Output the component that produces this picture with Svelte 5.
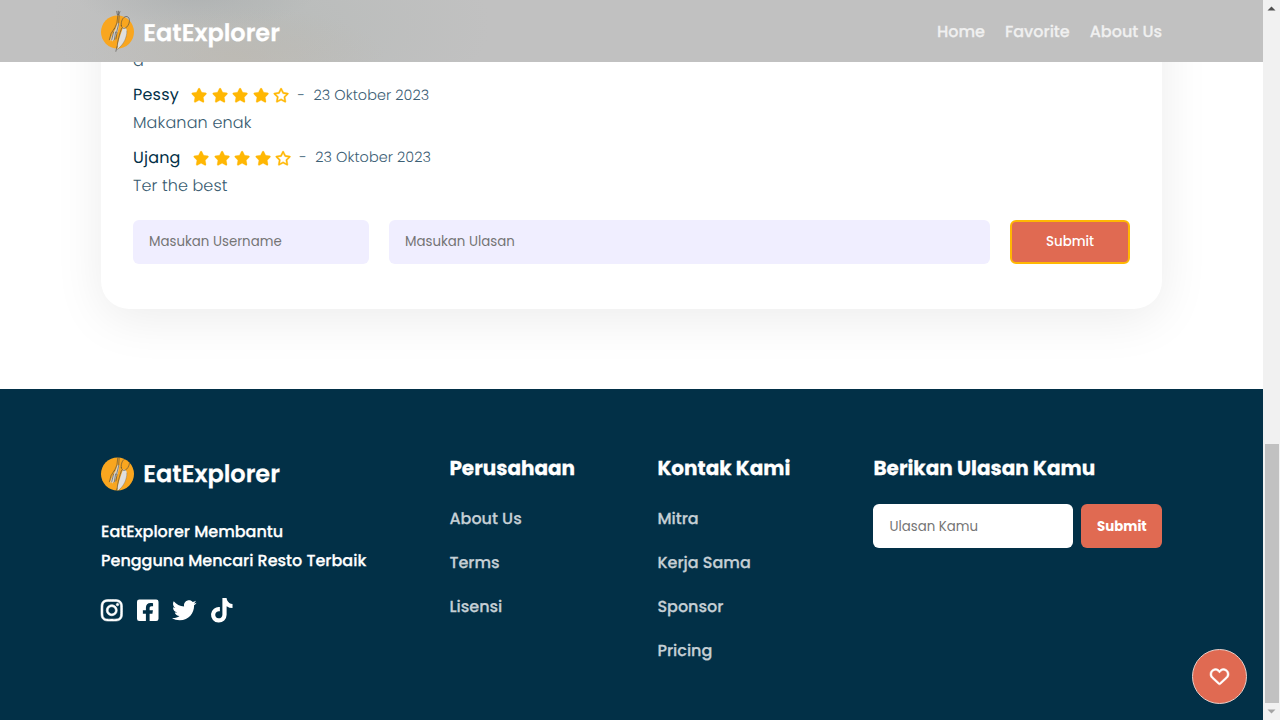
<script>
  const reviews = [
    { name: 'Pessy', date: '23 Oktober 2023', text: 'Makanan enak', tw: 118.6 },
    { name: 'Ujang', date: '23 Oktober 2023', text: 'Ter the best', tw: 94.5 }
  ];
  const nav = ['Home', 'Favorite', 'About Us'];
  const company = ['About Us', 'Terms', 'Lisensi'];
  const contact = ['Mitra', 'Kerja Sama', 'Sponsor', 'Pricing'];
  const starFull = 'M316.9 18C311.6 7 300.4 0 288.1 0s-23.4 7-28.8 18L195 150.3 51.4 171.5c-12 1.8-22 10.2-25.7 21.7s-.7 24.2 7.9 32.7L137.8 329 113.2 474.7c-2 12 3 24.2 12.9 31.3s23 8 33.8 2.3l128.3-68.5 128.3 68.5c10.8 5.7 23.9 4.9 33.8-2.3s14.9-19.3 12.9-31.3L438.5 329 542.7 225.9c8.6-8.5 11.7-21.2 7.9-32.7s-13.7-19.9-25.7-21.7L381.2 150.3 316.9 18z';
  const starEmpty = 'M287.9 0c9.2 0 17.6 5.2 21.6 13.5l68.6 141.3 153.2 22.6c9 1.3 16.5 7.6 19.3 16.3s.5 18.1-5.9 24.5L433.6 328.4l26.2 155.6c1.5 9-2.2 18.1-9.7 23.5s-17.3 6-25.3 1.7l-137-73.2L151 509.1c-8.1 4.3-17.9 3.7-25.3-1.7s-11.2-14.5-9.7-23.5l26.2-155.6L31.1 218.2c-6.5-6.4-8.7-15.9-5.9-24.5s10.3-14.9 19.3-16.3l153.2-22.6L266.3 13.5C270.4 5.2 278.7 0 287.9 0zm0 79L235.4 187.2c-3.5 7.1-10.2 12.1-18.1 13.3L99 217.9 184.9 303c5.5 5.5 8.1 13.3 6.8 21L171.4 443.7l105.2-56.2c7.1-3.8 15.6-3.8 22.6 0l105.2 56.2L384.2 324.1c-1.3-7.7 1.2-15.5 6.8-21l85.9-85.1L358.6 200.5c-7.8-1.2-14.6-6.1-18.1-13.3L287.9 79z';
  const socials = [
    { w: 448, bold: 12, d: 'M224.1 141c-63.6 0-114.9 51.3-114.9 114.9s51.3 114.9 114.9 114.9S339 319.5 339 255.9 287.7 141 224.1 141zm0 189.6c-41.1 0-74.7-33.5-74.7-74.7s33.5-74.7 74.7-74.7 74.7 33.5 74.7 74.7-33.6 74.7-74.7 74.7zm146.4-194.3c0 14.9-12 26.8-26.8 26.8-14.9 0-26.8-12-26.8-26.8s12-26.8 26.8-26.8 26.8 12 26.8 26.8zm76.1 27.2c-1.7-35.9-9.9-67.7-36.2-93.9-26.2-26.2-58-34.4-93.9-36.2-37-2.1-147.9-2.1-184.9 0-35.8 1.7-67.6 9.9-93.9 36.1s-34.4 58-36.2 93.9c-2.1 37-2.1 147.9 0 184.9 1.7 35.9 9.9 67.7 36.2 93.9s58 34.4 93.9 36.2c37 2.1 147.9 2.1 184.9 0 35.9-1.7 67.7-9.9 93.9-36.2 26.2-26.2 34.4-58 36.2-93.9 2.1-37 2.1-147.8 0-184.8zM398.8 388c-7.8 19.6-22.9 34.7-42.6 42.6-29.5 11.7-99.5 9-132.1 9s-102.7 2.6-132.1-9c-19.6-7.8-34.7-22.9-42.6-42.6-11.7-29.5-9-99.5-9-132.1s-2.6-102.7 9-132.1c7.8-19.6 22.9-34.7 42.6-42.6 29.5-11.7 99.5-9 132.1-9s102.7-2.6 132.1 9c19.6 7.8 34.7 22.9 42.6 42.6 11.7 29.5 9 99.5 9 132.1s2.7 102.7-9 132.1z' },
    { w: 448, bold: 0, d: 'M400 32H48A48 48 0 0 0 0 80v352a48 48 0 0 0 48 48h137.25V327.69h-63V256h63v-54.64c0-62.15 37-96.48 93.67-96.48 27.14 0 55.52 4.84 55.52 4.84v61h-31.27c-30.81 0-40.42 19.12-40.42 38.73V256h68.78l-11 71.69h-57.78V480H400a48 48 0 0 0 48-48V80a48 48 0 0 0-48-48z' },
    { w: 512, bold: 0, d: 'M459.37 151.716c.325 4.548.325 9.097.325 13.645 0 138.72-105.583 298.558-298.558 298.558-59.452 0-114.68-17.219-161.137-47.106 8.447.974 16.568 1.299 25.34 1.299 49.055 0 94.213-16.568 130.274-44.832-46.132-.975-84.792-31.188-98.112-72.772 6.498.974 12.995 1.624 19.818 1.624 9.421 0 18.843-1.3 27.614-3.573-48.081-9.747-84.143-51.98-84.143-102.985v-1.299c13.969 7.797 30.214 12.67 47.431 13.319-28.264-18.843-46.781-51.005-46.781-87.391 0-19.492 5.197-37.36 14.294-52.954 51.655 63.675 129.3 105.258 216.365 109.807-1.624-7.797-2.599-15.918-2.599-24.04 0-57.828 46.782-104.934 104.934-104.934 30.213 0 57.502 12.67 76.67 33.137 23.715-4.548 46.456-13.32 66.599-25.34-7.798 24.366-24.366 44.833-46.132 57.827 21.117-2.273 41.584-8.122 60.426-16.243-14.292 20.791-32.161 39.308-52.628 54.253z' },
    { w: 448, bold: 0, d: 'M448,209.91a210.06,210.06,0,0,1-122.77-39.25V349.38A162.55,162.55,0,1,1,185,188.31V278.2a74.62,74.62,0,1,0,52.23,71.18V0l88,0a121.18,121.18,0,0,0,1.86,22.17h0A122.18,122.18,0,0,0,381,102.39a121.43,121.43,0,0,0,67,20.14Z' }
  ];

  // Tracks a label so that it fills the given width in pixels.
  function fit(node, width) {
    node.style.letterSpacing = '0px';
    const natural = node.getBoundingClientRect().width;
    node.style.letterSpacing = (width - natural) / node.textContent.length + 'px';
  }
</script>

{#snippet brand(clipped)}
  <div class="brand">
    <svg class="logo" width="33" height="42" viewBox="0 0 33 42">
      <clipPath id="disc"><circle cx="16.5" cy="22" r="16.5" /></clipPath>
      <circle cx="16.5" cy="22" r="16.5" fill="#f9a61f" />
      <g clip-path={clipped ? 'url(#disc)' : null} stroke-linecap="round" stroke-linejoin="round">
        <path d="M16.8 12.5L14.5 19l-3 5-2.2 5.5.6 2 .9-2 .7 2.2.9-2.2 1 1.6.8-3.5 2.6-6 1.7-8z" fill="#d5d3cf" />
        <path d="M22 17.6c2.7-.4 4.3 1.6 3.8 5.9-1 6.5-4 11.5-9.1 15.3l-.3-3.8 3-10z" fill="#e0dfdd" />
        <g fill="none" stroke="#4a4640" stroke-width=".6">
          <path d="M15.8 1.3l.5 3.2 1.5.4 1.1-3.3M17.4 1.2v3M16.9 5l-1 8-2.6 6M18.2 5.2l-.6 9-2 8M13.3 18.5l-3.2 5-1.7 6.2M12.6 22l-1.8 7.5M14.6 22l-1.3 8M16 22.5L15 29" />
          <path d="M20.3 15.5c-.6-4 1.5-8.4 4.7-9 3-.2 4.2 3.2 3 6.7-1 3-3 5.2-5 5.2-1.7 0-2.6-1.5-2.7-2.9M20.5 18.5c-2 5.5-3.8 11.5-4.4 18.5M15.8 37l-.9 4.3" />
          <path d="M25.8 21c.2 6.5-3 13-9.3 18.5" stroke-width=".3" />
        </g>
      </g>
    </svg>
    <span class="wordmark">EatExplorer</span>
  </div>
{/snippet}

<div class="window">
  <div class="page">
    <header>
      {@render brand(false)}
      <nav>
        {#each nav as label}<a href="#top">{label}</a>{/each}
      </nav>
    </header>

    <main>
      <section class="card">
        <p>a</p>
        {#each reviews as r}
          <article>
            <div class="head">
              <b>{r.name}</b>
              <div class="stars">
                {#each [1, 1, 1, 1, 0] as on}
                  <svg viewBox="0 0 576 512" width="16.2" height="14.4"><path d={on ? starFull : starEmpty} fill="#ffb703" stroke="#ffb703" stroke-width={on ? 8 : 14} /></svg>
                {/each}
              </div>
              <span class="dash">-</span>
              <time use:fit={115.7}>{r.date}</time>
            </div>
            <p><span use:fit={r.tw}>{r.text}</span></p>
          </article>
        {/each}
        <form>
          <input class="user" placeholder="Masukan Username" />
          <input class="review" placeholder="Masukan Ulasan" />
          <button type="button">Submit</button>
        </form>
      </section>
    </main>

    <footer>
      <div class="about">
        {@render brand(true)}
        <div class="tagline">
          <span>EatExplorer Membantu</span>
          <span>Pengguna Mencari Resto Terbaik</span>
        </div>
        <div class="social">
          {#each socials as s}
            <svg viewBox="0 0 {s.w} 512" width={s.w * 24.6 / 512} height="24.6"><path d={s.d} fill="#fff" stroke="#fff" stroke-width={s.bold} /></svg>
          {/each}
        </div>
      </div>
      <div class="links">
        <h3>Perusahaan</h3>
        {#each company as label}<a href="#top">{label}</a>{/each}
      </div>
      <div class="links">
        <h3>Kontak Kami</h3>
        {#each contact as label}<a href="#top">{label}</a>{/each}
      </div>
      <div class="links">
        <h3>Berikan Ulasan Kamu</h3>
        <div class="send">
          <input placeholder="Ulasan Kamu" />
          <button type="button">Submit</button>
        </div>
      </div>
    </footer>

    <button class="fab" type="button" aria-label="Favorite">
      <svg width="19" height="19" viewBox="0 0 512 512"><path fill="#fff" stroke="#fff" stroke-width="14" d="M225.8 468.2l-2.5-2.3L48.1 303.2C17.4 274.7 0 234.7 0 192.8v-3.3c0-70.4 50-130.8 119.2-144C158.6 37.9 198.9 47 231 69.6c9 6.4 17.4 13.8 25 22.3c4.2-4.8 8.7-9.2 13.5-13.3c3.7-3.2 7.5-6.2 11.5-9c0 0 0 0 0 0C313.1 47 353.4 37.9 392.8 45.4C462 58.6 512 119.1 512 189.5v3.3c0 41.9-17.4 81.9-48.1 110.4L288.7 465.9l-2.5 2.3c-8.2 7.6-19 11.9-30.2 11.9s-22-4.2-30.2-11.9zM239.1 145c-.4-.3-.7-.7-1-1.1l-17.8-20c0 0-.1-.1-.1-.1c0 0 0 0 0 0c-23.1-25.9-58-37.7-92-31.2C81.6 101.5 48 142.1 48 189.5v3.3c0 28.5 11.9 55.8 32.8 75.2L256 430.7 431.2 268c20.9-19.4 32.8-46.7 32.8-75.2v-3.3c0-47.3-33.6-88-80.1-96.9c-34-6.5-69 5.4-92 31.2c0 0 0 0-.1 .1s0 0-.1 .1l-17.8 20c-.3 .4-.7 .7-1 1.1c-4.5 4.5-10.6 7-16.9 7s-12.4-2.5-16.9-7z" /></svg>
    </button>
  </div>

  <div class="scrollbar">
    <svg width="9" height="5" viewBox="0 0 9 5"><path d="M.5 4.5L4.5.5l4 4z" fill="#505050" /></svg>
    <div class="thumb"></div>
    <svg width="9" height="5" viewBox="0 0 9 5"><path d="M.5.5l4 4 4-4z" fill="#a3a3a3" /></svg>
  </div>
</div>

<style>
  :global(body) { margin: 0; overflow: hidden; }
  .window, .window * { box-sizing: border-box; }
  .window {
    display: flex; width: 1280px; height: 720px; overflow: hidden; background: #fff;
    font-family: Poppins, Inter, "Open Sans", sans-serif; font-size: 16px;
    text-rendering: geometricPrecision; color: #023047;
  }
  span, a, b, time, h3 { white-space: nowrap; }
  a { text-decoration: none; }
  p, h3 { margin: 0; }
  svg { display: block; flex: none; overflow: visible; }
  input, button { font-family: inherit; font-size: 13.33px; border: 0; }
  .page { position: relative; display: flex; flex-direction: column; width: 1263px; height: 720px; overflow: hidden; }
  header {
    position: absolute; z-index: 2; top: 0; left: 0; width: 100%; height: 62px; padding: 0 101px;
    display: flex; align-items: center; justify-content: space-between;
    background:
      radial-gradient(ellipse 120px 36px at 195px -6px, rgba(165, 169, 170, .55), transparent),
      radial-gradient(ellipse 150px 50px at 235px 56px, rgba(190, 183, 172, .5), transparent),
      radial-gradient(ellipse 220px 110px at 270px 25px, rgba(182, 186, 184, .7), transparent),
      #c1c1c1;
  }
  .brand { display: flex; align-items: center; gap: 9.3px; height: 42px; }
  .wordmark { font-size: 24px; font-weight: 600; line-height: 36px; color: #fff; }
  header .logo { margin-top: -1px; }
  header .wordmark { padding-top: 5px; }
  .wordmark, nav a, footer h3, .links a, .tagline { -webkit-text-stroke: .25px currentColor; }
  nav { display: flex; gap: 20px; padding-top: 2px; }
  nav a { font-weight: 500; color: #f0f0f0; line-height: 24px; }
  main { flex: none; height: 389px; padding: 0 101px; }
  .card {
    height: 309px; padding: 47px 32px 0; background: #fff; border-radius: 0 0 28px 28px;
    box-shadow: 0 10px 50px rgba(0, 0, 0, .08);
  }
  .card p { height: 28px; line-height: 28px; font-weight: 300; color: #385b70; }
  article { padding-top: 6px; }
  article + article { padding-top: 7px; }
  .head { display: flex; align-items: center; height: 28px; }
  .head b { font-weight: 400; letter-spacing: .2px; line-height: 24px; padding-bottom: 1px; }
  .stars { display: flex; gap: 4.3px; margin-left: 12.5px; }
  .dash { width: 8px; margin-left: 8px; padding-top: 2px; font-size: 14.4px; font-weight: 300; color: #3d6075; }
  time { margin-left: 8px; padding-top: 2px; font-size: 14.4px; font-weight: 300; color: #3d6075; }
  article + article .dash, article + article time { padding-top: 1px; }
  .card form { display: flex; margin-top: 20px; }
  input { height: 44px; padding: 0 16px; border-radius: 6px; outline: 0; color: #023047; }
  input::placeholder { color: #757575; opacity: 1; }
  .card input { background: #f0eeff; }
  .user { width: 236px; margin-right: 20px; }
  .review { width: 601px; margin-right: 20px; }
  button { height: 44px; padding: 0; border-radius: 6px; background: #e06a52; color: #fff; }
  .card button { width: 120px; border: 2px solid #ffb703; font-weight: 500; }
  footer {
    flex: 1; display: grid; grid-template-columns: 348px 208px 216px 289px; align-items: start;
    padding: 64px 101px 0; background: #023047; color: #fff;
  }
  footer .brand { margin-top: -1px; }
  footer .logo { margin-top: 0; }
  footer .wordmark { padding-top: 4px; }
  footer .links { padding-left: .4px; }
  .tagline { display: flex; flex-direction: column; align-items: flex-start; margin-top: 23px; line-height: 29px; font-weight: 500; }
  .social { display: flex; gap: 14.4px; margin: 23px 0 0 -.4px; }
  .links { display: flex; flex-direction: column; align-items: flex-start; }
  h3 { height: 30px; line-height: 30px; font-size: 20px; font-weight: 700; margin-bottom: 11px; }
  .links a { margin-top: 12px; height: 32px; line-height: 26px; font-weight: 500; color: #c5cfd5; }
  .send { display: flex; gap: 8px; margin-top: 10.4px; }
  .send input { width: 200px; padding-top: 1px; background: #fff; }
  .send button { width: 81px; padding-top: 1px; font-weight: 700; }
  .fab {
    position: absolute; left: 1192.4px; top: 649px; width: 55px; height: 55px; border-radius: 50%;
    border: 1px solid #e8cfc9; display: flex; align-items: center; justify-content: center;
  }
  .scrollbar { width: 17px; display: flex; flex-direction: column; align-items: center; padding: 6px 0 6px; background: #f1f1f1; }
  .thumb { width: 14px; height: 259px; margin: auto 0 6px; background: #c1c1c1; }
</style>
